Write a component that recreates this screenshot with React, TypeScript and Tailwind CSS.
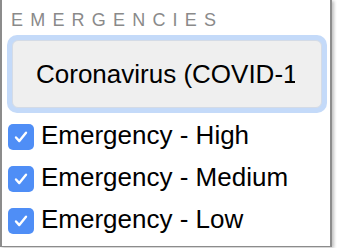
import React from 'react'

const ITEMS = ['Emergency - High', 'Emergency - Medium', 'Emergency - Low']

function CheckBox() {
  return (
    <span className="flex h-[26px] w-[26px] shrink-0 items-center justify-center rounded-[5px] bg-[#4f8ef6]">
      <svg width="18" height="18" viewBox="0 0 18 18" fill="none">
        <path d="M4 9.5l3.3 3.6L14 4.8" stroke="white" strokeWidth="2.4" strokeLinecap="round" strokeLinejoin="round" />
      </svg>
    </span>
  )
}

export default function App() {
  return (
    <div className="h-[248px] w-[342px] bg-white font-['Liberation_Sans',Arial,sans-serif]">
      <div className="flex h-[247px] w-[332px] flex-col border-b border-l-2 border-r-2 border-[#8c8c8c] shadow-[2px_1px_3px_rgba(0,0,0,0.25)]">
        <div className="pl-[9px] pt-[10px] text-[18px] leading-[20px] tracking-[7.2px] text-[#8a8a8a]">EMERGENCIES</div>

        <div className="ml-[5px] mt-[5px] w-[320px] rounded-[10px] bg-[#c4daf9] p-[5px]">
          <button
            type="button"
            className="flex h-[68px] w-full items-center overflow-hidden rounded-[6px] border border-[#d4dbe6] bg-[#efefef] pl-[23px] pr-[26px] text-[26px] text-black"
          >
            <span className="block overflow-hidden whitespace-nowrap">Coronavirus (COVID-19)</span>
          </button>
        </div>

        <div className="mt-[9px] flex flex-col gap-[14px] pl-[6px]">
          {ITEMS.map((label) => (
            <label key={label} className="flex items-start gap-[7px]">
              <span className="pt-[2px]">
                <CheckBox />
              </span>
              <span className="text-[26px] leading-[26px] text-black">{label}</span>
            </label>
          ))}
        </div>
      </div>
    </div>
  )
}
